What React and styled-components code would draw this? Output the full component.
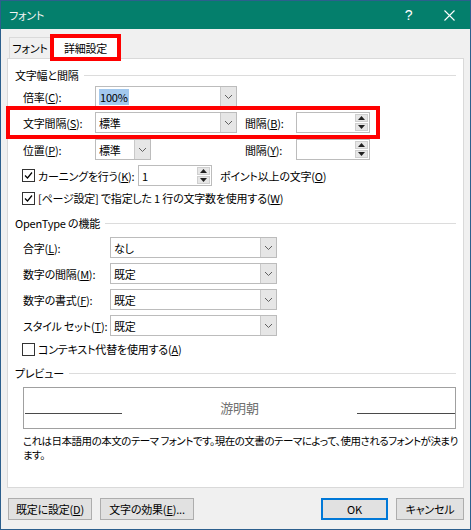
import React from "react";
import styled, { createGlobalStyle } from "styled-components";

const GlobalStyle = createGlobalStyle`
  * { box-sizing: border-box; }
  html, body { margin: 0; padding: 0; background: #ffffff; }
  body {
    font-family: "Noto Sans CJK JP", "Liberation Sans", sans-serif;
    font-size: 11px;
    color: #000;
  }
`;

const ChevronDown = () => (
  <svg width="9" height="6" viewBox="0 0 9 6">
    <polyline points="1,1 4.5,4.5 8,1" fill="none" stroke="#606060" strokeWidth="1" />
  </svg>
);

const Tri = ({ up }) => (
  <svg width="7" height="4" viewBox="0 0 7 4">
    <polygon points={up ? "0,4 7,4 3.5,0" : "0,0 7,0 3.5,4"} fill="#202020" />
  </svg>
);

const CloseGlyph = () => (
  <svg width="11" height="11" viewBox="0 0 11 11">
    <path d="M0.5 0.5 L10.5 10.5 M10.5 0.5 L0.5 10.5" stroke="#ffffff" strokeWidth="1.1" />
  </svg>
);

const CheckGlyph = () => (
  <svg width="11" height="11" viewBox="0 0 11 11">
    <polyline points="2,5.5 4.5,8 9,2.5" fill="none" stroke="#000" strokeWidth="1.2" />
  </svg>
);

const Combo = ({ w, value, selected }) => (
  <ComboBox $w={w}>
    <ComboValue>{selected ? <Selected>{value}</Selected> : value}</ComboValue>
    <ComboArrow>
      <ChevronDown />
    </ComboArrow>
  </ComboBox>
);

const Spin = ({ w, value }) => (
  <SpinBox $w={w}>
    <ComboValue>{value}</ComboValue>
    <SpinButtons>
      <SpinBtn>
        <Tri up />
      </SpinBtn>
      <SpinBtn>
        <Tri />
      </SpinBtn>
    </SpinButtons>
  </SpinBox>
);

const Check = ({ checked, children }) => (
  <CheckLabel>
    <CheckBox>{checked && <CheckGlyph />}</CheckBox>
    <span>{children}</span>
  </CheckLabel>
);

export default function App() {
  return (
    <>
      <GlobalStyle />
      <Window>
        <TitleBar>
          <TitleText>フォント</TitleText>
          <TitleBtn>?</TitleBtn>
          <TitleBtn>
            <CloseGlyph />
          </TitleBtn>
        </TitleBar>

        <Body>
          <Tabs>
            <Tab>フォント</Tab>
            <Tab $active>詳細設定</Tab>
          </Tabs>

          <Panel>
            <Head $mt={8}>文字幅と間隔</Head>

            <Row $mt={3}>
              <Label $w={72}>倍率(<u>C</u>):</Label>
              <Combo w={142} value="100%" selected />
            </Row>

            <Mark>
              <Row>
                <Label $w={72}>文字間隔(<u>S</u>):</Label>
                <Combo w={142} value="標準" />
                <Label $w={51} $ml={8}>間隔(<u>B</u>):</Label>
                <Spin w={74} value="" />
              </Row>
            </Mark>

            <Row $mt={4}>
              <Label $w={72}>位置(<u>P</u>):</Label>
              <Combo w={56} value="標準" />
              <Label $w={51} $ml={94}>間隔(<u>Y</u>):</Label>
              <Spin w={74} value="" />
            </Row>

            <Row $mt={5}>
              <Label $w={115}>
                <Check checked>
                  カーニングを行う(<u>K</u>):
                </Check>
              </Label>
              <Spin w={74} value="1" />
              <Label $ml={8}>ポイント以上の文字(<u>O</u>)</Label>
            </Row>

            <Row $mt={4} $h={16}>
              <Check checked>
                [ページ設定] で指定した 1 行の文字数を使用する(<u>W</u>)
              </Check>
            </Row>

            <Head $mt={9}>OpenType の機能</Head>

            <Row $mt={6}>
              <Label $w={87}>合字(<u>L</u>):</Label>
              <Combo w={167} value="なし" />
            </Row>
            <Row $mt={5}>
              <Label $w={87}>数字の間隔(<u>M</u>):</Label>
              <Combo w={167} value="既定" />
            </Row>
            <Row $mt={5}>
              <Label $w={87}>数字の書式(<u>F</u>):</Label>
              <Combo w={167} value="既定" />
            </Row>
            <Row $mt={5}>
              <Label $w={87}>スタイル セット(<u>T</u>):</Label>
              <Combo w={167} value="既定" />
            </Row>

            <Row $mt={5} $h={16}>
              <Check>
                コンテキスト代替を使用する(<u>A</u>)
              </Check>
            </Row>

            <Head $mt={8}>プレビュー</Head>

            <Preview>
              <PreviewLine $w={97} $ml={1} />
              <PreviewText>游明朝</PreviewText>
              <PreviewLine $w={98} />
            </Preview>

            <Description>
              <DescLine>
                これは日本語用の本文のテーマ フォントです。現在の文書のテーマによって、使用されるフォントが決まり
              </DescLine>
              <DescLine>ます。</DescLine>
            </Description>
          </Panel>

          <ButtonRow>
            <Button $w={84}>
              既定に設定(<u>D</u>)
            </Button>
            <Button $w={94} $ml={8}>
              文字の効果(<u>E</u>)...
            </Button>
            <Button $w={67} $ml="auto" $default>
              OK
            </Button>
            <Button $w={68} $ml={8}>
              キャンセル
            </Button>
          </ButtonRow>
        </Body>
      </Window>
    </>
  );
}

const Window = styled.div`
  width: 471px;
  height: 530px;
  border: 1px solid #2c5f8d;
  background: #f0f0f0;
  display: flex;
  flex-direction: column;
  font-feature-settings: "palt";
  letter-spacing: -0.2px;
  line-height: 16px;
`;

const TitleBar = styled.div`
  height: 28px;
  background: #047f6c;
  color: #ffffff;
  display: flex;
  align-items: center;
  padding-left: 8px;
  flex-shrink: 0;
`;

const TitleText = styled.div`
  flex: 1;
  font-size: 11px;
  color: #f4f4f4;
`;

const TitleBtn = styled.div`
  width: 41px;
  height: 28px;
  display: flex;
  align-items: center;
  justify-content: center;
  font-family: "Liberation Sans", sans-serif;
  font-size: 14px;
  color: #ffffff;
`;

const Body = styled.div`
  flex: 1;
  padding: 8px 6px 0 6px;
  display: flex;
  flex-direction: column;
`;

const Tabs = styled.div`
  display: flex;
  height: 21px;
  padding-left: 2px;
`;

const Tab = styled.div`
  position: relative;
  height: ${({ $active }) => ($active ? "19px" : "21px")};
  margin-top: ${({ $active }) => ($active ? "1px" : "0")};
  margin-left: ${({ $active }) => ($active ? "3px" : "0")};
  width: ${({ $active }) => ($active ? "63px" : "42px")};
  display: flex;
  align-items: center;
  justify-content: center;
  background: ${({ $active }) => ($active ? "#ffffff" : "#f0f0f0")};
  border: ${({ $active }) => ($active ? "none" : "1px solid #dadada")};
  border-bottom: none;
  outline: ${({ $active }) => ($active ? "4px solid #ff0000" : "none")};
  z-index: ${({ $active }) => ($active ? 1 : 0)};
`;

const Panel = styled.div`
  height: 430px;
  background: #ffffff;
  border: 1px solid #d9d9d9;
  padding: 0 7px;
  display: flex;
  flex-direction: column;
`;

const Head = styled.div`
  display: flex;
  align-items: center;
  height: 16px;
  margin-top: ${({ $mt }) => $mt || 0}px;
  white-space: nowrap;
  &::after {
    content: "";
    flex: 1;
    height: 1px;
    margin-left: 5px;
    background: #dcdcdc;
  }
`;

const Row = styled.div`
  display: flex;
  align-items: center;
  height: ${({ $h }) => $h || 21}px;
  margin-top: ${({ $mt }) => $mt || 0}px;
  padding-left: 8px;
  white-space: nowrap;
`;

const Mark = styled.div`
  align-self: flex-start;
  width: 366px;
  margin: 3px 0 0 -5px;
  padding: 2px 0 2px 5px;
  outline: 4px solid #ff0000;
`;

const Label = styled.div`
  width: ${({ $w }) => ($w ? `${$w}px` : "auto")};
  margin-left: ${({ $ml }) => $ml || 0}px;
  flex-shrink: 0;
`;

const ComboBox = styled.div`
  width: ${({ $w }) => $w}px;
  height: 21px;
  border: 1px solid #bcbcbc;
  background: #ffffff;
  display: flex;
  flex-shrink: 0;
`;

const ComboValue = styled.div`
  flex: 1;
  padding-left: 3px;
  display: flex;
  align-items: center;
  overflow: hidden;
`;

const Selected = styled.span`
  background: #a3c9ee;
  padding: 0 1px;
`;

const ComboArrow = styled.div`
  width: 16px;
  background: #e6e6e6;
  border-left: 1px solid #c9c9c9;
  display: flex;
  align-items: center;
  justify-content: center;
`;

const SpinBox = styled.div`
  width: ${({ $w }) => $w}px;
  height: 21px;
  border: 1px solid #bcbcbc;
  background: #ffffff;
  display: flex;
  flex-shrink: 0;
  padding: 1px 1px 1px 0;
`;

const SpinButtons = styled.div`
  width: 13px;
  display: flex;
  flex-direction: column;
  gap: 1px;
`;

const SpinBtn = styled.div`
  flex: 1;
  background: #e6e6e6;
  border: 1px solid #cfcfcf;
  display: flex;
  align-items: center;
  justify-content: center;
`;

const CheckLabel = styled.div`
  display: flex;
  align-items: center;
  gap: 3px;
  margin-left: -1px;
`;

const CheckBox = styled.div`
  width: 13px;
  height: 13px;
  border: 1px solid #333333;
  background: #ffffff;
  display: flex;
  align-items: center;
  justify-content: center;
`;

const Preview = styled.div`
  margin: 6px 0 0 8px;
  height: 42px;
  border: 1px solid #a0a0a0;
  display: flex;
  align-items: center;
`;

const PreviewLine = styled.div`
  width: ${({ $w }) => $w}px;
  margin-left: ${({ $ml }) => $ml || 0}px;
  height: 1px;
  margin-top: 10px;
  background: #4a4a4a;
`;

const PreviewText = styled.div`
  flex: 1;
  text-align: center;
  font-size: 13px;
  color: #707070;
`;

const Description = styled.div`
  margin: 5px 0 0 8px;
  font-size: 10.5px;
  line-height: 14px;
  letter-spacing: -0.5px;
`;

const DescLine = styled.div`
  white-space: nowrap;
`;

const ButtonRow = styled.div`
  display: flex;
  height: 22px;
  margin-top: 10px;
  padding: 0 0 0 1px;
`;

const Button = styled.div`
  width: ${({ $w }) => $w}px;
  margin-left: ${({ $ml }) => (typeof $ml === "number" ? `${$ml}px` : $ml || "0")};
  height: 22px;
  border: 1px solid ${({ $default }) => ($default ? "#0078d7" : "#adadad")};
  box-shadow: ${({ $default }) => ($default ? "inset 0 0 0 1px #0078d7" : "none")};
  background: #e1e1e1;
  display: flex;
  align-items: center;
  justify-content: center;
  white-space: nowrap;
`;
